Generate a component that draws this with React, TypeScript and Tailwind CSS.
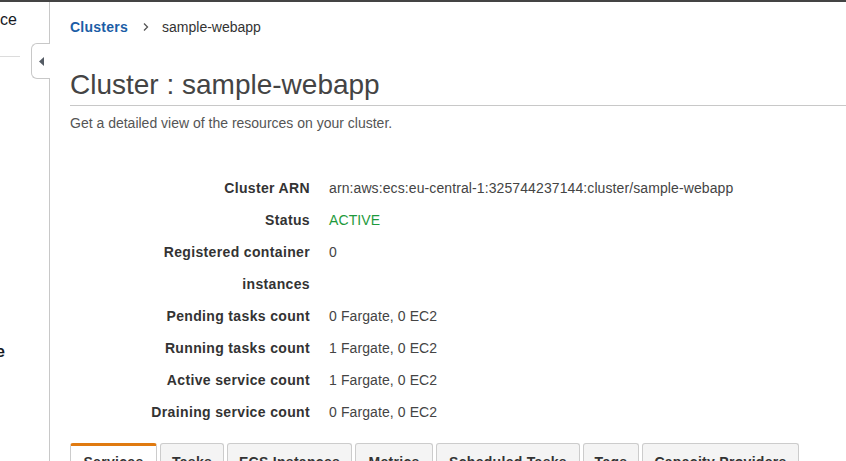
import React from "react";

const rows: { label: string[]; value: string; green?: boolean }[] = [
  { label: ["Cluster ARN"], value: "arn:aws:ecs:eu-central-1:325744237144:cluster/sample-webapp" },
  { label: ["Status"], value: "ACTIVE", green: true },
  { label: ["Registered container", "instances"], value: "0" },
  { label: ["Pending tasks count"], value: "0 Fargate, 0 EC2" },
  { label: ["Running tasks count"], value: "1 Fargate, 0 EC2" },
  { label: ["Active service count"], value: "1 Fargate, 0 EC2" },
  { label: ["Draining service count"], value: "0 Fargate, 0 EC2" },
];

const tabs = [
  { name: "Services", w: "w-[87px]", active: true },
  { name: "Tasks", w: "w-[64px]" },
  { name: "ECS Instances", w: "w-[125px]" },
  { name: "Metrics", w: "w-[78px]" },
  { name: "Scheduled Tasks", w: "w-[144px]" },
  { name: "Tags", w: "w-[56px]" },
  { name: "Capacity Providers", w: "w-[157px]" },
];

export default function App() {
  return (
    <div className="w-[846px] h-[461px] overflow-hidden bg-white border-t-2 border-[#444] flex font-['Liberation_Sans',Arial,sans-serif]">
      {/* Sidebar */}
      <div className="relative w-[50px] shrink-0 border-r border-[#c8c8c8] flex flex-col">
        <div className="mt-[8px] w-[17px] h-[20px] overflow-hidden flex justify-end">
          <span className="whitespace-nowrap text-[16px] leading-[20px] text-[#16191f]">
            Amazon Container Service
          </span>
        </div>
        <div className="mt-[26px] w-[20px] h-px bg-[#dcdcdc]" />
        <div className="mt-[285px] w-[5px] h-[20px] overflow-hidden flex justify-end">
          <span className="whitespace-nowrap text-[16px] leading-[20px] font-bold text-[#16191f]">
            AWS Marketplace
          </span>
        </div>
        <div className="absolute left-[31px] top-[41px] w-[19px] h-[36px] bg-white border border-r-0 border-[#c8c8c8] rounded-l-[6px] flex items-center justify-center">
          <svg width="6" height="9" viewBox="0 0 6 9" className="ml-[1px]">
            <polygon points="5,0 5,9 0,4.5" fill="#545b64" />
          </svg>
        </div>
      </div>

      {/* Main */}
      <div className="flex-1 min-w-0 pl-[20px] flex flex-col">
        <div className="mt-[15px] h-[20px] flex items-center text-[14px] leading-[20px]">
          <span className="font-bold text-[#1b5da6] tracking-[0.25px]">Clusters</span>
          <svg width="6" height="10" viewBox="0 0 6 10" className="ml-[15px] mr-[13px]">
            <polyline points="1,1.5 4.5,5 1,8.5" fill="none" stroke="#555" strokeWidth="1.3" />
          </svg>
          <span className="text-[#333]">sample-webapp</span>
        </div>

        <div className="mt-[31px] pb-[3px] border-b border-[#c8c8c8]">
          <h1 className="text-[28px] leading-[34px] text-[#444] font-normal">Cluster : sample-webapp</h1>
        </div>

        <p className="mt-[7px] text-[14px] leading-[20px] text-[#555]">
          Get a detailed view of the resources on your cluster.
        </p>

        <div className="mt-[39px] flex flex-col">
          {rows.map((r) => (
            <div key={r.label.join(" ")} className="flex text-[14px] leading-[32px]">
              <div className="w-[240px] shrink-0 text-right font-bold text-[#333] tracking-[0.35px]">
                {r.label.map((l) => (
                  <div key={l}>{l}</div>
                ))}
              </div>
              <div className={`ml-[19px] tracking-[0.1px] ${r.green ? "text-[#1e9a3c]" : "text-[#444]"}`}>{r.value}</div>
            </div>
          ))}
        </div>

        <div className="mt-[15px] flex gap-[3px]">
          {tabs.map((t) => (
            <div
              key={t.name}
              className={`${t.w} shrink-0 h-[30px] rounded-t-[3px] border border-b-0 text-center text-[14px] font-bold text-[#333] leading-[20px] tracking-[0.3px] ${
                t.active
                  ? "bg-white border-[#cccccc] border-t-[3px] border-t-[#e07a10] pt-[6px]"
                  : "bg-[#f4f4f4] border-[#cccccc] pt-[8px]"
              }`}
            >
              {t.name}
            </div>
          ))}
        </div>
      </div>
    </div>
  );
}
